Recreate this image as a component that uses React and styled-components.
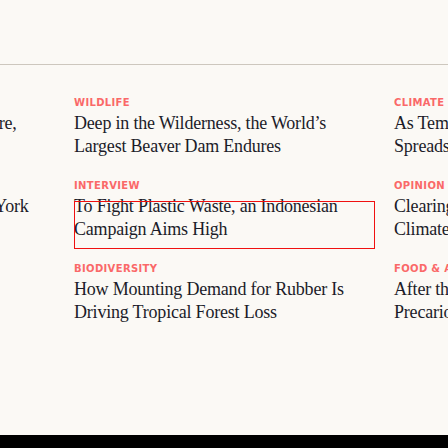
import React from 'react';
import styled, { createGlobalStyle } from 'styled-components';

const Global = createGlobalStyle`
  html, body { margin: 0; padding: 0; background: #fbf9f5; }
  body { overflow: hidden; }
`;

const Page = styled.div`
  width: 448px;
  height: 448px;
  overflow: hidden;
  display: flex;
  flex-direction: column;
  background: #fbf9f5;
`;

const Masthead = styled.header`
  height: 64px;
  flex: none;
  border-bottom: 1px solid #cdc7be;
`;

const Section = styled.section`
  padding: 32px 0 111px;
  overflow: hidden;
`;

const Columns = styled.div`
  display: flex;
  gap: 19px;
  margin-left: -246px;
`;

const Column = styled.ul`
  list-style: none;
  margin: 0;
  padding: 0;
  width: 301px;
  flex: none;
  display: flex;
  flex-direction: column;
  gap: 22px;
`;

const Item = styled.li`
  display: flex;
  flex-direction: column;
  gap: 3px;
`;

const Label = styled.span`
  font-family: "DejaVu Sans", "Liberation Sans", sans-serif;
  font-weight: 700;
  font-size: 10px;
  line-height: 12px;
  letter-spacing: 0.35px;
  text-transform: uppercase;
  white-space: nowrap;
  color: #fa6868;
`;

const Headline = styled.a`
  position: relative;
  display: block;
  height: 46px;
  font-family: "Liberation Serif", "Times New Roman", serif;
  font-size: 18px;
  line-height: 23px;
  letter-spacing: -0.2px;
  color: #1c1c29;
  text-decoration: none;

  ${p => p.$focused && `
    &::after {
      content: "";
      position: absolute;
      left: 0;
      right: 0;
      top: 6px;
      height: 48px;
      box-sizing: border-box;
      border: 1px solid #f01010;
    }
  `}
`;

const Footer = styled.footer`
  flex: 1;
  background: #000;
`;

const columns = [
  [
    { tag: 'Oceans', title: 'Why Rising Seas Threaten the Shore, Scientists Warn' },
    { tag: 'Cities', title: 'Inside the Fight to Clean Up New York Harbor' },
    { tag: 'Science', title: 'A Conservation Success Story' },
  ],
  [
    { tag: 'Wildlife', title: 'Deep in the Wilderness, the World’s Largest Beaver Dam Endures' },
    { tag: 'Interview', title: 'To Fight Plastic Waste, an Indonesian Campaign Aims High', focused: true },
    { tag: 'Biodiversity', title: 'How Mounting Demand for Rubber Is Driving Tropical Forest Loss' },
  ],
  [
    { tag: 'Climate', title: 'As Temperatures Rise, Dengue Fever Spreads to New Regions' },
    { tag: 'Opinion', title: 'Clearing the Forest Is No Way to Fight Climate Change' },
    { tag: 'Food & Agriculture', title: 'After the Floods, Pakistan Faces a Precarious Future' },
  ],
];

export default function App() {
  return (
    <Page>
      <Global />
      <Masthead />
      <Section>
        <Columns>
          {columns.map((col, i) => (
            <Column key={i}>
              {col.map(story => (
                <Item key={story.title}>
                  <Label>{story.tag}</Label>
                  <Headline href="#" $focused={story.focused}>{story.title}</Headline>
                </Item>
              ))}
            </Column>
          ))}
        </Columns>
      </Section>
      <Footer />
    </Page>
  );
}
